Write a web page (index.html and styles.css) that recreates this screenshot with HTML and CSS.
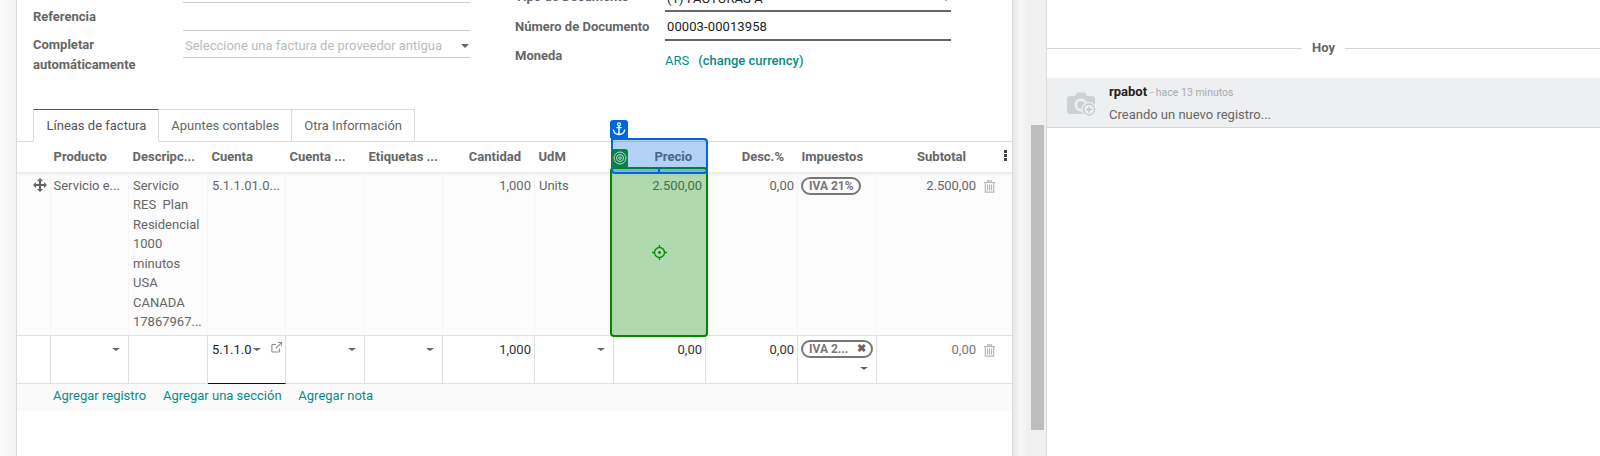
FILE: index.html
```html
<!DOCTYPE html>
<html lang="es">

<head>
    <meta charset="UTF-8">
    <title>Factura de proveedor</title>
    <link rel="stylesheet" href="styles.css">
</head>

<body>
    <div class="main">
        <div class="form-pane">
            <div class="sheet">
                <!-- form fields, scrolled a bit so the top is cut off -->
                <div class="groups">
                    <div class="group">
                        <div class="label"></div>
                        <div class="field"></div>
                        <div class="label">Referencia</div>
                        <div class="field"></div>
                        <div class="label">Completar automáticamente</div>
                        <div class="field field-short placeholder">Seleccione una factura de proveedor antigua <span class="caret"></span></div>
                    </div>
                    <div class="group group-right">
                        <div class="label">Tipo de Documento</div>
                        <div class="field field-req field-type">(1) FACTURAS A <span class="caret"></span></div>
                        <div class="label label-number">Número de Documento</div>
                        <div class="field field-req">00003-00013958</div>
                        <div class="label label-currency">Moneda</div>
                        <div class="currency"><a href="#">ARS</a><a href="#" class="change">(change currency)</a></div>
                    </div>
                </div>

                <ul class="tabs">
                    <li class="tab active">Líneas de factura</li>
                    <li class="tab">Apuntes contables</li>
                    <li class="tab">Otra Información</li>
                </ul>

                <table class="lines">
                    <colgroup>
                        <col class="c-handle"><col class="c-78"><col class="c-79"><col class="c-78"><col class="c-79"><col class="c-78">
                        <col class="c-92"><col class="c-79"><col class="c-92"><col class="c-92"><col class="c-79"><col class="c-100"><col class="c-last">
                    </colgroup>
                    <thead>
                        <tr>
                            <th></th>
                            <th>Producto</th>
                            <th>Descripc...</th>
                            <th>Cuenta</th>
                            <th>Cuenta ...</th>
                            <th>Etiquetas ...</th>
                            <th class="num">Cantidad</th>
                            <th>UdM</th>
                            <th class="num">Precio</th>
                            <th class="num">Desc.%</th>
                            <th>Impuestos</th>
                            <th class="num sub">Subtotal</th>
                            <th class="kebab-cell"><span class="kebab"></span></th>
                        </tr>
                    </thead>
                    <tbody>
                        <tr class="row-saved">
                            <td class="handle">
                                <svg width="14" height="14" viewBox="0 0 14 14"><path d="M7 0l3 3H8v3h3V4l3 3-3 3V8H8v3h2l-3 3-3-3h2V8H3v2L0 7l3-3v2h3V3H4z" fill="#666"/></svg>
                            </td>
                            <td>Servicio e...</td>
                            <td>Servicio<br>RES&nbsp; Plan<br>Residencial<br>1000<br>minutos<br>USA<br>CANADA<br>17867967...</td>
                            <td>5.1.1.01.0...</td>
                            <td></td>
                            <td></td>
                            <td class="num">1,000</td>
                            <td>Units</td>
                            <td class="num">2.500,00</td>
                            <td class="num">0,00</td>
                            <td><span class="tag">IVA 21%</span></td>
                            <td class="num sub">2.500,00</td>
                            <td class="trash-cell">
                                <svg class="trash" width="11" height="13" viewBox="0 0 11 13"><path d="M3.500 2V.8h4V2M0 2.500h11M1.300 2.500v9.700h8.400V2.500M3.500 4.500v6M5.500 4.500v6M7.500 4.500v6" fill="none" stroke="#b4b8bd" stroke-width="1.200"/></svg>
                            </td>
                        </tr>
                        <tr class="row-edit">
                            <td></td>
                            <td><div class="m2o"><span class="caret"></span></div></td>
                            <td></td>
                            <td class="active-cell">
                                <div class="m2o m2o-account">
                                    <span>5.1.1.0</span><span class="caret"></span>
                                    <svg class="ext" width="15" height="15" viewBox="0 0 13 13"><path d="M9.500 7.500v3.200a1 1 0 0 1-1 1H2a1 1 0 0 1-1-1V4.200a1 1 0 0 1 1-1h3.500M8 .8h4.200V5M12 1L5.500 7.500" fill="none" stroke="#888" stroke-width="1.200"/></svg>
                                </div>
                            </td>
                            <td><div class="m2o"><span class="caret"></span></div></td>
                            <td><div class="m2o"><span class="caret"></span></div></td>
                            <td class="num">1,000</td>
                            <td><div class="m2o"><span class="caret"></span></div></td>
                            <td class="num">0,00</td>
                            <td class="num">0,00</td>
                            <td>
                                <span class="tag tag-edit"><span>IVA 2...</span><span class="tag-x">&#10006;</span></span>
                                <div class="m2o m2o-tax"><span class="caret"></span></div>
                            </td>
                            <td class="num sub sub-edit">0,00</td>
                            <td class="trash-cell">
                                <svg class="trash" width="11" height="13" viewBox="0 0 11 13"><path d="M3.500 2V.8h4V2M0 2.500h11M1.300 2.500v9.700h8.400V2.500M3.500 4.500v6M5.500 4.500v6M7.500 4.500v6" fill="none" stroke="#b4b8bd" stroke-width="1.200"/></svg>
                            </td>
                        </tr>
                    </tbody>
                    <tfoot>
                        <tr>
                            <td colspan="13">
                                <a href="#">Agregar registro</a>
                                <a href="#">Agregar una sección</a>
                                <a href="#">Agregar nota</a>
                            </td>
                        </tr>
                    </tfoot>
                </table>
            </div>

            <!-- recorder overlay on top of the Precio column -->
            <div class="target-box">
                <svg class="crosshair" width="15" height="15" viewBox="0 0 15 15"><circle cx="7.500" cy="7.500" r="5" fill="none" stroke="#0a8a0a" stroke-width="1.400"/><circle cx="7.500" cy="7.500" r="1.400" fill="#0a8a0a"/><path d="M7.500 0v2.500M7.500 12.500V15M0 7.500h2.500M12.500 7.500H15" stroke="#0a8a0a" stroke-width="1.400"/></svg>
            </div>
            <div class="anchor-box"></div>
            <div class="anchor-tab">
                <svg width="14" height="14" viewBox="0 0 14 14"><circle cx="7" cy="2.300" r="1.500" fill="none" stroke="#fff" stroke-width="1.200"/><path d="M7 3.800v8.700M4.400 5.600h5.200M1.300 7.500c.3 3 2.500 4.800 5.700 5 3.200-.2 5.400-2 5.700-5" fill="none" stroke="#fff" stroke-width="1.400"/></svg>
            </div>
            <div class="target-tab">
                <svg width="14" height="14" viewBox="0 0 14 14" fill="none" stroke="#b9dcc8"><circle cx="7" cy="7" r="6"/><circle cx="7" cy="7" r="3.500"/><circle cx="7" cy="7" r="1.300"/></svg>
            </div>
            <div class="anchor-notch"></div>
        </div>

        <div class="scrollbar"><div class="thumb"></div></div>

        <div class="chatter">
            <div class="today"><span>Hoy</span></div>
            <div class="message">
                <svg class="avatar" width="30" height="26" viewBox="0 0 30 26">
                    <path d="M3 5h5l2-3.500h8L20 5h5a3 3 0 0 1 3 3v12a3 3 0 0 1-3 3H3a3 3 0 0 1-3-3V8a3 3 0 0 1 3-3z" fill="#cfd0d1"/>
                    <circle cx="14" cy="14" r="6.500" fill="#eeeff1"/>
                    <circle cx="14" cy="14" r="4" fill="#cfd0d1"/>
                    <circle cx="22" cy="18.500" r="7.500" fill="#eeeff1"/>
                    <circle cx="22" cy="18.500" r="5.500" fill="none" stroke="#c4c5c6" stroke-width="1.300"/>
                    <path d="M22 15.500v6M19 18.500h6" stroke="#c4c5c6" stroke-width="1.300"/>
                </svg>
                <div>
                    <div class="msg-head"><b>rpabot</b> <span class="msg-date">- hace 13 minutos</span></div>
                    <div class="msg-body">Creando un nuevo registro...</div>
                </div>
            </div>
        </div>
    </div>
</body>

</html>
```

FILE: styles.css
```css
body {
    margin: 0;
    font-family: Roboto, "Noto Sans", sans-serif;
    font-size: 13px;
    line-height: 19.5px;
    color: #666;
    background-color: #fff;
}

a {
    color: #088a8a;
    text-decoration: none;
}

.main {
    display: flex;
    height: 456px;
    overflow: hidden;
}

/* form side */

.form-pane {
    position: relative;
    width: 1029px;
    flex: none;
    padding-left: 16px;
    box-sizing: border-box;
    overflow: hidden;
    background: linear-gradient(to right, #fcfcfc, #f2f2f3 16px, #e6e6e8 1013px, #f8f8f8 1020px, #eeeeee 1029px);
}

.sheet {
    width: 997px;
    height: 483px;
    margin-top: -27px;
    box-sizing: border-box;
    background-color: #fff;
    border-left: 1px solid #d8dadd;
    border-right: 1px solid #d8dadd;
}

.groups {
    display: flex;
    height: 136px;
    padding-left: 16px;
}

.group {
    display: grid;
    grid-template-columns: 150px 287px;
    grid-auto-rows: min-content;
    width: 482px;
    box-sizing: border-box;
    padding-top: 2px;
}

.group-right {
    grid-template-columns: 150px 286px;
    padding-top: 10px;
}

.label {
    padding-top: 4px;
    font-weight: 700;
}

.field {
    display: flex;
    justify-content: space-between;
    align-items: center;
    height: 28px;
    padding: 0 0 0 2px;
    box-sizing: border-box;
    border-bottom: 1px solid #ccc;
}

.field-short {
    height: 27px;
    padding-top: 3px;
}

.placeholder {
    color: #bbb;
}

.field-req {
    height: 29px;
    color: #222;
    padding-top: 2px;
    letter-spacing: .1px;
    border-bottom: 2px solid #666;
}

.field-type {
    padding-top: 5px;
}

.group-right .label {
    padding-top: 4px;
}

.group-right .label-number {
    padding-top: 5px;
}

.group-right .label-currency {
    padding-top: 5px;
}

.currency {
    padding-top: 10px;
}

.change {
    margin-left: 9px;
    font-weight: 500;
}

.caret {
    display: inline-block;
    width: 0;
    height: 0;
    border-top: 4px solid #666;
    border-left: 4px solid transparent;
    border-right: 4px solid transparent;
}

.field .caret {
    margin-right: 1px;
}

/* tabs */

.tabs {
    display: flex;
    height: 33px;
    margin: 0;
    padding: 0 0 0 16px;
    box-sizing: border-box;
    list-style-type: none;
    border-bottom: 1px solid #d8dadd;
}

.tab {
    height: 33px;
    padding: 6px 11.5px 0 12.5px;
    box-sizing: border-box;
    border: 1px solid #d8dadd;
    border-left: none;
}

.tab.active {
    color: #555;
    border-left: 1px solid #d8dadd;
    border-top-color: #6b4e68;
    border-bottom-color: #fff;
}

/* table */

.lines {
    width: 995px;
    table-layout: fixed;
    border-collapse: separate;
    border-spacing: 0;
}

.c-handle { width: 34px; }
.c-78 { width: 78px; }
.c-79 { width: 79px; }
.c-92 { width: 92px; }
.c-100 { width: 100px; }
.c-last { width: 35px; }

.lines th {
    height: 30px;
    padding: 0 14px 0 3.5px;
    box-sizing: border-box;
    white-space: nowrap;
    text-align: left;
    font-weight: 700;
    background-color: #fff;
}

.lines th:nth-child(2),
.lines td:nth-child(2) {
    padding-left: 2.5px;
}

.lines td {
    padding: 3px 3px 3px 4px;
    vertical-align: top;
    box-sizing: border-box;
    border-right: 1px solid #f5f5f6;
}

.lines .num {
    text-align: right;
}

.lines th.sub {
    padding-right: 11px;
}

.lines td.sub {
    padding-right: 1px;
    border-right: none;
}

.lines th.kebab-cell {
    padding: 0;
}

.kebab {
    display: block;
    width: 3px;
    height: 3px;
    margin: -3px 0 0 27px;
    background-color: #444;
    box-shadow: 0 4px 0 #444, 0 -4px 0 #444;
}

.row-saved td {
    height: 164px;
    padding-top: 3.5px;
    white-space: nowrap;
    background: linear-gradient(rgba(0, 0, 0, .08), rgba(0, 0, 0, 0) 4px), #fcfcfc;
    border-bottom: 1px solid #dee0e3;
}

.row-edit td {
    height: 48px;
    padding-top: 4px;
    color: #333;
    border-right-color: #dee0e3;
    border-bottom: 1px solid #dee0e3;
}

.row-saved td.handle {
    padding: 6px 0 0 16px;
}

.lines td.trash-cell {
    padding: 8px 0 0 7px;
    border-right: none;
}

.trash {
    display: block;
}

.lines td.sub-edit {
    color: #777;
}

.m2o {
    display: flex;
    justify-content: flex-end;
    align-items: center;
    height: 19.5px;
    padding-right: 5px;
}

.m2o-account {
    justify-content: flex-start;
    padding-right: 0;
    color: #222;
}

.ext {
    margin-left: 10px;
    margin-top: -4px;
}

.m2o-tax {
    padding-right: 5px;
    margin-top: 1px;
}

.m2o .caret {
    border-width: 3px 4px 0;
}

.m2o-account .caret {
    margin-left: 1px;
}

.row-edit td.active-cell {
    border-bottom-color: #111;
}

.tag {
    display: inline-block;
    height: 18px;
    padding: 0 5px 0 6px;
    margin: 1px 0 0 -1px;
    box-sizing: border-box;
    border: 2px solid #777;
    border-radius: 9px;
    font-size: 12px;
    font-weight: 700;
    line-height: 14px;
    color: #777;
    vertical-align: top;
}

.tag-edit {
    display: flex;
    justify-content: space-between;
    width: 72px;
    margin-top: 0;
}

.tag-x {
    font-size: 11px;
    color: #666;
}

.lines tfoot td {
    height: 27px;
    padding: 2px 0 0 36px;
    background-color: #fafafa;
    border-right: none;
}

.lines tfoot a {
    margin-right: 13.5px;
}

/* overlay boxes */

.target-box {
    position: absolute;
    left: 610px;
    top: 167px;
    width: 98px;
    height: 170px;
    box-sizing: border-box;
    background-color: rgba(0, 136, 0, .3);
    border: 2px solid #008a00;
    border-radius: 4px;
}

.crosshair {
    position: absolute;
    left: 40px;
    top: 76px;
}

.anchor-box {
    position: absolute;
    left: 611px;
    top: 138px;
    width: 97px;
    height: 36px;
    box-sizing: border-box;
    background-color: rgba(0, 102, 221, .3);
    border: 2px solid #0067dc;
    border-radius: 0 4px 4px 4px;
}

.anchor-tab {
    position: absolute;
    left: 610px;
    top: 120px;
    width: 18px;
    height: 18px;
    display: flex;
    align-items: center;
    justify-content: center;
    background-color: #0067dc;
    border-radius: 3px 3px 0 0;
}

.target-tab {
    position: absolute;
    left: 612px;
    top: 149px;
    width: 16px;
    height: 18px;
    display: flex;
    align-items: center;
    justify-content: center;
    background-color: #0b7f48;
    border-radius: 0 3px 0 0;
}

.anchor-notch {
    position: absolute;
    left: 658px;
    top: 167px;
    width: 2px;
    height: 6px;
    background-color: #0067dc;
}

/* scrollbar between form and chatter */

.scrollbar {
    width: 17px;
    flex: none;
    background-color: #f0f0f0;
    border-right: 1px solid #d8dadd;
}

.thumb {
    width: 13px;
    height: 305px;
    margin: 125px 0 0 2px;
    background-color: #bdbdbd;
}

/* chatter */

.chatter {
    flex: 1;
    padding-top: 38px;
    background-color: #fff;
}

.today {
    display: flex;
    align-items: center;
    height: 20px;
    font-weight: 700;
}

.today::before,
.today::after {
    content: "";
    flex: 1;
    height: 1px;
    background-color: #d5d6dc;
}

.today span {
    width: 43px;
    text-align: center;
}

.message {
    display: flex;
    height: 50px;
    margin-top: 20px;
    padding: 4px 0 0 20px;
    box-sizing: border-box;
    background-color: #eeeff1;
    border-bottom: 1px solid #d5d6dc;
}

.avatar {
    margin: 9px 12px 0 0;
}

.msg-head b {
    color: #222;
    font-weight: 700;
}

.msg-date {
    font-size: 10.5px;
    color: #aaa;
}

.msg-body {
    margin-top: 2px;
}
```
